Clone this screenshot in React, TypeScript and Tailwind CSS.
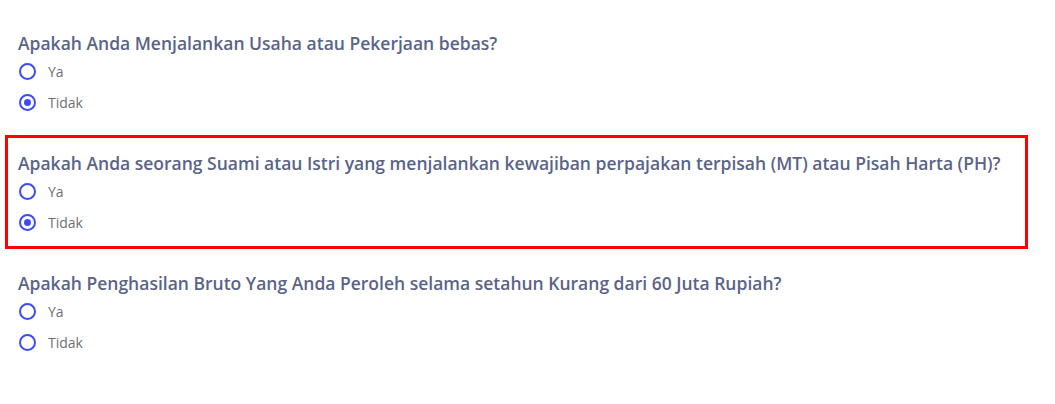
import React from "react";

type Q = { q: string; selected: number | null; highlight?: boolean };

const questions: Q[] = [
  { q: "Apakah Anda Menjalankan Usaha atau Pekerjaan bebas?", selected: 1 },
  {
    q: "Apakah Anda seorang Suami atau Istri yang menjalankan kewajiban perpajakan terpisah (MT) atau Pisah Harta (PH)?",
    selected: 1,
    highlight: true,
  },
  { q: "Apakah Penghasilan Bruto Yang Anda Peroleh selama setahun Kurang dari 60 Juta Rupiah?", selected: null },
];

function Radio({ checked }: { checked: boolean }) {
  return (
    <span className="flex h-[17px] w-[17px] items-center justify-center rounded-full border-2 border-[#3d4cf5]">
      {checked && <span className="h-[7px] w-[7px] rounded-full bg-[#3d4cf5]" />}
    </span>
  );
}

export default function App() {
  return (
    <div
      className="min-h-[404px] w-[1055px] bg-white pt-[15px] pl-[5px]"
      style={{ fontFamily: '"Open Sans", "Noto Sans", sans-serif' }}
    >
      <div className="flex w-[1023px] flex-col gap-[6px]">
        {questions.map((item, i) => (
          <div
            key={i}
            className={`h-[114px] border-[3px] pt-[13px] pl-[10px] ${
              item.highlight ? "border-[#ff0000]" : "border-transparent"
            }`}
          >
            <div className="text-[17.5px] leading-[24px] font-semibold text-[#5a6487]">{item.q}</div>
            <div className="flex flex-col pt-[1px]">
              {["Ya", "Tidak"].map((opt, j) => (
                <div key={opt} className="flex h-[31px] items-center">
                  <span className="ml-[1px] mr-[12px]">
                    <Radio checked={item.selected === j} />
                  </span>
                  <span className="text-[14px] text-[#6f6f73]">{opt}</span>
                </div>
              ))}
            </div>
          </div>
        ))}
      </div>
    </div>
  );
}
